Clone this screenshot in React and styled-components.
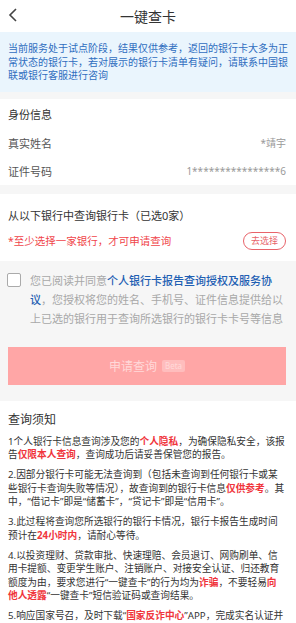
import React from "react";
import styled, { createGlobalStyle } from "styled-components";

const GlobalStyle = createGlobalStyle`
  html, body {
    margin: 0;
    padding: 0;
    background: #f6f6f6;
    font-family: "Noto Sans", "Noto Sans CJK SC", sans-serif;
  }
`;

const Page = styled.div`
  width: 296px;
  min-height: 623px;
  background: #f6f6f6;
  overflow: hidden;
`;

const Header = styled.header`
  height: 32px;
  background: #fff;
  display: flex;
  align-items: center;
  justify-content: center;
  position: relative;
`;

const BackIcon = styled.svg`
  position: absolute;
  left: 8px;
  top: 8px;
`;

const Title = styled.h1`
  margin: 0;
  font-size: 14px;
  font-weight: 400;
  color: #333;
`;

const Notice = styled.div`
  background: #eaf5fd;
  color: #2f6dbf;
  font-size: 10px;
  line-height: 13.5px;
  padding: 10px 7px 9px 8px;
`;

const Card = styled.section`
  background: #fff;
  margin-top: ${(p) => p.$gap || 7}px;
  padding: ${(p) => p.$pad || "0 10px 0 8px"};
`;

const SectionTitle = styled.div`
  font-size: ${(p) => p.$size || 11}px;
  color: #333;
  line-height: 16px;
  padding: ${(p) => p.$pad || "8px 0 6px"};
`;

const InfoRow = styled.div`
  display: flex;
  justify-content: space-between;
  align-items: center;
  height: 28px;
  font-size: 11px;
`;

const Label = styled.span`
  color: #555;
`;

const Value = styled.span`
  color: #999;
  font-size: 10px;
`;

const BankRow = styled.div`
  display: flex;
  justify-content: space-between;
  align-items: center;
  padding: 2px 0 11px;
`;

const Warn = styled.span`
  color: #f0454a;
  font-size: 10.5px;
`;

const PillButton = styled.button`
  border: 1px solid #e8636a;
  background: #fff;
  color: #e8636a;
  border-radius: 9px;
  font-family: inherit;
  font-size: 9px;
  height: 18px;
  padding: 0 7px;
  line-height: 16px;
`;

const Agree = styled.div`
  display: flex;
  gap: 9px;
  padding: 10px 10px 0 7px;
`;

const Box = styled.span`
  flex: none;
  width: 12px;
  height: 12px;
  border: 1px solid #aaa;
  border-radius: 2px;
  margin-top: 2px;
  background: #fff;
`;

const AgreeText = styled.p`
  margin: 0;
  font-size: 11px;
  line-height: 19px;
  color: #a8a8a8;
`;

const Link = styled.span`
  color: #1f5fb3;
  font-weight: 500;
`;

const Submit = styled.button`
  display: flex;
  align-items: center;
  justify-content: center;
  gap: 5px;
  width: 278px;
  height: 38px;
  margin: 19px 0 0 8px;
  border: none;
  background: #ffa6a6;
  color: #ffd9d9;
  font-family: inherit;
  font-size: 12px;
`;

const Beta = styled.span`
  font-size: 8px;
  padding: 0 3px;
  line-height: 12px;
  background: #ffbdbd;
  border-radius: 2px;
`;

const Rules = styled(Card)`
  margin-top: 16px;
  padding: 5px 10px 20px 8px;
`;

const Item = styled.p`
  margin: 0 0 6.5px;
  font-size: 9.7px;
  line-height: 13.5px;
  color: #333;
`;

const Hot = styled.b`
  color: #f0353c;
  font-weight: 700;
`;

export default function App() {
  return (
    <Page>
      <GlobalStyle />
      <Header>
        <BackIcon width="10" height="14" viewBox="0 0 10 14">
          <path d="M8 1 L2 7 L8 13" fill="none" stroke="#444" strokeWidth="1.6" />
        </BackIcon>
        <Title>一键查卡</Title>
      </Header>
      <Notice>
        当前服务处于试点阶段，结果仅供参考，返回的银行卡大多为正常状态的银行卡，若对展示的银行卡清单有疑问，请联系中国银联或银行客服进行咨询
      </Notice>
      <Card>
        <SectionTitle>身份信息</SectionTitle>
        <InfoRow>
          <Label>真实姓名</Label>
          <Value>*靖宇</Value>
        </InfoRow>
        <InfoRow>
          <Label>证件号码</Label>
          <Value>1****************6</Value>
        </InfoRow>
      </Card>
      <Card $gap={9}>
        <SectionTitle $pad="14px 0 6px">从以下银行中查询银行卡（已选0家）</SectionTitle>
        <BankRow>
          <Warn>*至少选择一家银行，才可申请查询</Warn>
          <PillButton>去选择</PillButton>
        </BankRow>
      </Card>
      <Agree>
        <Box />
        <AgreeText>
          您已阅读并同意<Link>个人银行卡报告查询授权及服务协议</Link>，您授权将您的姓名、手机号、证件信息提供给以上已选的银行用于查询所选银行的银行卡卡号等信息
        </AgreeText>
      </Agree>
      <Submit>
        申请查询<Beta>Beta</Beta>
      </Submit>
      <Rules>
        <SectionTitle $size={12} $pad="6px 0 7px">查询须知</SectionTitle>
        <Item>
          1个人银行卡信息查询涉及您的<Hot>个人隐私</Hot>，为确保隐私安全，该报告<Hot>仅限本人查询</Hot>，查询成功后请妥善保管您的报告。
        </Item>
        <Item>
          2.因部分银行卡可能无法查询到（包括未查询到任何银行卡或某些银行卡查询失败等情况），故查询到的银行卡信息<Hot>仅供参考</Hot>。其中，“借记卡”即是“储蓄卡”，“贷记卡”即是“信用卡”。
        </Item>
        <Item>
          3.此过程将查询您所选银行的银行卡情况，银行卡报告生成时间预计在<Hot>24小时内</Hot>，请耐心等待。
        </Item>
        <Item>
          4.以投资理财、贷款审批、快速理赔、会员退订、网购刷单、信用卡提额、变更学生账户、注销账户、对接安全认证、归还教育额度为由，要求您进行“一键查卡”的行为均为<Hot>诈骗</Hot>，不要轻易<Hot>向他人透露</Hot>“一键查卡”短信验证码或查询结果。
        </Item>
        <Item>
          5.响应国家号召，及时下载“<Hot>国家反诈中心</Hot>”APP，完成实名认证并开启来电预警功能。
        </Item>
      </Rules>
    </Page>
  );
}
